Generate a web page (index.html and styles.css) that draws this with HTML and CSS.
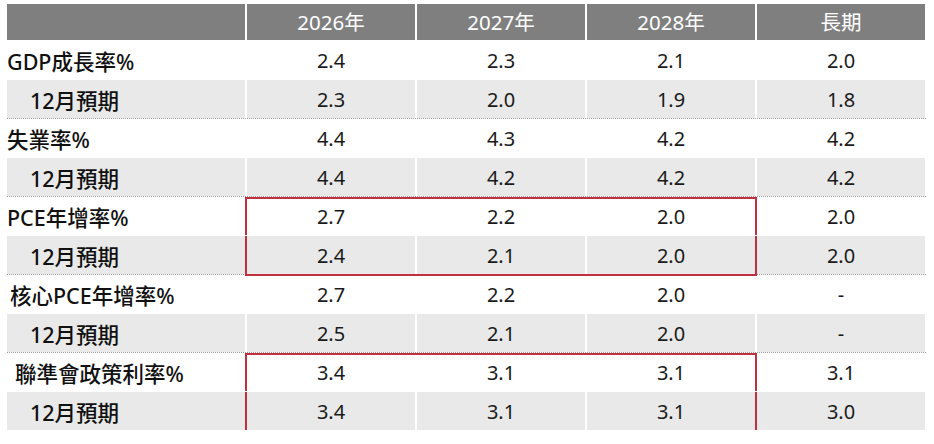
FILE: index.html
```html
<!DOCTYPE html>
<html lang="zh-Hant">
<head>
<meta charset="utf-8">
<title>經濟預測</title>
<link rel="stylesheet" href="styles.css">
</head>
<body>
<div class="table">
  <div class="row head">
    <div class="cell"></div>
    <div class="cell">2026年</div>
    <div class="cell">2027年</div>
    <div class="cell">2028年</div>
    <div class="cell">長期</div>
  </div>
  <div class="row main">
    <div class="cell label">GDP成長率%</div>
    <div class="cell">2.4</div><div class="cell">2.3</div><div class="cell">2.1</div><div class="cell">2.0</div>
  </div>
  <div class="row sub">
    <div class="cell label indent">12月預期</div>
    <div class="cell">2.3</div><div class="cell">2.0</div><div class="cell">1.9</div><div class="cell">1.8</div>
  </div>
  <div class="row main">
    <div class="cell label">失業率%</div>
    <div class="cell">4.4</div><div class="cell">4.3</div><div class="cell">4.2</div><div class="cell">4.2</div>
  </div>
  <div class="row sub">
    <div class="cell label indent">12月預期</div>
    <div class="cell">4.4</div><div class="cell">4.2</div><div class="cell">4.2</div><div class="cell">4.2</div>
  </div>
  <div class="row main box-top">
    <div class="cell label">PCE年增率%</div>
    <div class="cell">2.7</div><div class="cell">2.2</div><div class="cell">2.0</div><div class="cell">2.0</div>
  </div>
  <div class="row sub box-bottom">
    <div class="cell label indent">12月預期</div>
    <div class="cell">2.4</div><div class="cell">2.1</div><div class="cell">2.0</div><div class="cell">2.0</div>
  </div>
  <div class="row main">
    <div class="cell label core">核心PCE年增率%</div>
    <div class="cell">2.7</div><div class="cell">2.2</div><div class="cell">2.0</div><div class="cell">-</div>
  </div>
  <div class="row sub">
    <div class="cell label indent">12月預期</div>
    <div class="cell">2.5</div><div class="cell">2.1</div><div class="cell">2.0</div><div class="cell">-</div>
  </div>
  <div class="row main box-top">
    <div class="cell label fed">聯準會政策利率%</div>
    <div class="cell">3.4</div><div class="cell">3.1</div><div class="cell">3.1</div><div class="cell">3.1</div>
  </div>
  <div class="row sub box-bottom last">
    <div class="cell label indent">12月預期</div>
    <div class="cell">3.4</div><div class="cell">3.1</div><div class="cell">3.1</div><div class="cell">3.0</div>
  </div>
</div>
</body>
</html>
```
FILE: styles.css
```css
html, body {
  margin: 0;
  background: #ffffff;
}
body {
  padding: 4px 0 0 7px;
  font-family: "Noto Sans", "Noto Sans CJK TC", sans-serif;
  color: #1a1a1a;
}
.table {
  width: 919px;
  display: flex;
  flex-direction: column;
}
.row {
  position: relative;
  display: grid;
  grid-template-columns: 238px repeat(4, 168px);
  column-gap: 2px;
  height: 38px;
  border-bottom: 1px solid #ffffff;
}
.row.head {
  height: 36px;
}
.row.head .cell {
  background: #7f7f7f;
  color: #ffffff;
  font-size: 20.5px;
  padding-top: 0;
}
.row.sub {
  border-bottom: 1px dotted #9a9a9a;
}
.row.sub .cell {
  background: #e8e9e8;
}
.row.last {
  border-bottom: none;
}
.cell {
  display: flex;
  align-items: center;
  justify-content: center;
  font-size: 20px;
  line-height: 1;
  padding-top: 2px;
  box-sizing: border-box;
}
.cell.label {
  justify-content: flex-start;
  font-size: 21.5px;
  font-weight: 500;
  color: #111111;
  padding-top: 4px;
  padding-left: 0;
}
.cell.indent {
  padding-left: 23px;
}
.cell.core {
  padding-left: 3px;
}
.cell.fed {
  padding-left: 8px;
}
.box-top::after,
.box-bottom::after {
  content: "";
  position: absolute;
  left: 238px;
  width: 512px;
  border-left: 2px solid #c1303e;
  border-right: 2px solid #c1303e;
  box-sizing: border-box;
}
.box-top::after {
  top: 0;
  bottom: 0;
  border-top: 2px solid #c1303e;
}
.box-bottom::after {
  top: 0;
  bottom: -2px;
  border-bottom: 2px solid #c1303e;
}
```
